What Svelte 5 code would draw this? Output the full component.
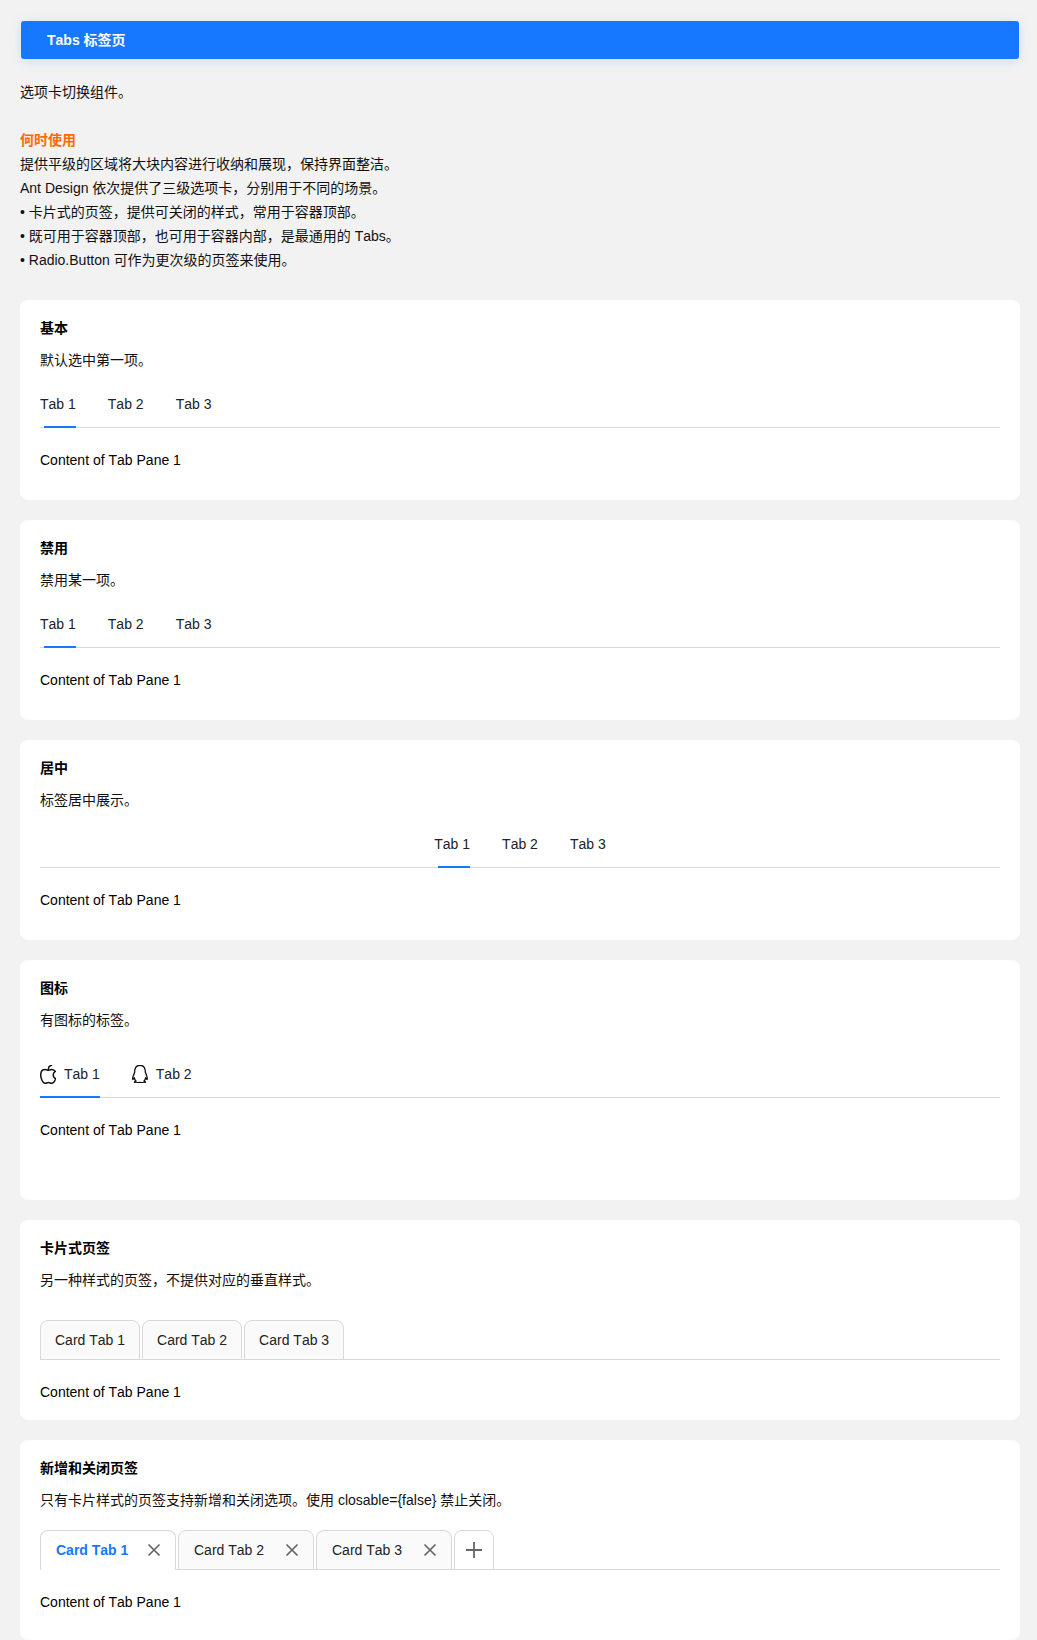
<script>
  const lines = [
    '提供平级的区域将大块内容进行收纳和展现，保持界面整洁。',
    'Ant Design 依次提供了三级选项卡，分别用于不同的场景。',
    '• 卡片式的页签，提供可关闭的样式，常用于容器顶部。',
    '• 既可用于容器顶部，也可用于容器内部，是最通用的 Tabs。',
    '• Radio.Button 可作为更次级的页签来使用。'
  ];
  const plainTabs = ['Tab 1', 'Tab 2', 'Tab 3'];
  const cardTabs = ['Card Tab 1', 'Card Tab 2', 'Card Tab 3'];
</script>

<div class="page">
  <header class="banner">Tabs 标签页</header>

  <section class="intro">
    <p class="lead">选项卡切换组件。</p>
    <h2>何时使用</h2>
    {#each lines as line}
      <p>{line}</p>
    {/each}
  </section>

  <section class="card">
    <h3>基本</h3>
    <p>默认选中第一项。</p>
    <div class="tabs">
      {#each plainTabs as tab}
        <span class="tab">{tab}</span>
      {/each}
      <i class="ink"></i>
    </div>
    <p class="pane">Content of Tab Pane 1</p>
  </section>

  <section class="card">
    <h3>禁用</h3>
    <p>禁用某一项。</p>
    <div class="tabs">
      {#each plainTabs as tab}
        <span class="tab">{tab}</span>
      {/each}
      <i class="ink"></i>
    </div>
    <p class="pane">Content of Tab Pane 1</p>
  </section>

  <section class="card">
    <h3>居中</h3>
    <p>标签居中展示。</p>
    <div class="tabs centered">
      <div class="group">
        {#each plainTabs as tab}
          <span class="tab">{tab}</span>
        {/each}
        <i class="ink"></i>
      </div>
    </div>
    <p class="pane">Content of Tab Pane 1</p>
  </section>

  <section class="card icons">
    <h3>图标</h3>
    <p>有图标的标签。</p>
    <div class="tabs">
      <span class="tab">
        <svg width="16" height="19" viewBox="150 90 720 860" fill="none" stroke="#111" stroke-width="68" stroke-linejoin="round">
          <path d="M747 536c0-68 31-120 93-158-35-50-88-77-157-83-66-5-138 38-164 38-28 0-92-36-142-36C273 298 180 380 180 547c0 49 9 100 27 152 24 69 101 222 184 219 47-1 81-33 142-33 60 0 90 33 143 33 84-1 156-141 178-207-107-50-107-170-107-175z"/>
          <path d="M525 300C520 210 575 125 665 105" stroke-linecap="round"/>
        </svg>
        Tab 1
      </span>
      <span class="tab">
        <svg width="16" height="18" viewBox="170 100 684 830" fill="none" stroke="#111" stroke-width="62" stroke-linejoin="round">
          <path d="M825 613c-16-51-34-95-63-165C767 262 689 112 512 112 332 112 256 265 261 448c-28 71-47 114-63 165-34 110-23 155-15 156 18 2 70-82 70-82 0 49 25 113 80 159-26 8-86 30-72 54 11 19 196 12 250 6 53 6 238 13 249-6 14-24-45-46-71-54 54-46 80-110 80-159 0 0 52 84 70 82 8-1 19-46-15-156z"/>
        </svg>
        Tab 2
      </span>
      <i class="ink wide"></i>
    </div>
    <p class="pane">Content of Tab Pane 1</p>
  </section>

  <section class="card cards">
    <h3>卡片式页签</h3>
    <p>另一种样式的页签，不提供对应的垂直样式。</p>
    <div class="card-tabs">
      {#each cardTabs as tab}
        <span class="card-tab">{tab}</span>
      {/each}
    </div>
    <p class="pane">Content of Tab Pane 1</p>
  </section>

  <section class="card editable">
    <h3>新增和关闭页签</h3>
    <p>只有卡片样式的页签支持新增和关闭选项。使用 closable={'{'}false{'}'} 禁止关闭。</p>
    <div class="card-tabs">
      {#each cardTabs as tab, i}
        <span class="card-tab closable" class:active={i === 0}>
          {tab}
          <svg width="14" height="14" viewBox="0 0 14 14" stroke="#666" stroke-width="1.7" fill="none">
            <path d="M1.5 1.5l11 11M12.5 1.5l-11 11"/>
          </svg>
        </span>
      {/each}
      <span class="card-tab add">
        <svg width="16" height="16" viewBox="0 0 16 16" stroke="#666" stroke-width="1.8" fill="none">
          <path d="M0 8h16M8 0v16"/>
        </svg>
      </span>
    </div>
    <p class="pane">Content of Tab Pane 1</p>
  </section>
</div>

<style>
  :global(body) {
    background: #f2f2f2;
  }

  .page {
    display: flex;
    flex-direction: column;
    padding: 21px 17px 0 20px;
    font-family: "Liberation Sans", "Noto Sans CJK SC", sans-serif;
    font-kerning: none;
    font-size: 14px;
    line-height: 24px;
    color: #111;
  }

  p, h2, h3 {
    margin: 0;
    font-size: 14px;
  }

  .banner {
    height: 38px;
    line-height: 38px;
    margin-left: 1px;
    margin-right: 1px;
    padding-left: 26px;
    background: #1677ff;
    color: #fff;
    font-weight: 700;
    border-radius: 3px;
    box-shadow: 0 2px 12px rgba(22, 119, 255, 0.15);
  }

  .intro {
    margin-top: 21px;
    margin-bottom: 28px;
  }

  .lead {
    margin-bottom: 24px;
  }

  .intro h2 {
    color: #ff6a00;
    font-weight: 700;
  }

  .card {
    background: #fff;
    border-radius: 8px;
    padding: 20px 20px 28px;
    margin-bottom: 20px;
  }

  .card:last-child {
    margin-bottom: 0;
    padding-bottom: 26px;
  }

  h3 {
    line-height: 16px;
    font-weight: 700;
    color: #000;
    margin-bottom: 12px;
  }

  .tabs {
    position: relative;
    display: flex;
    gap: 32px;
    margin-top: 10px;
    padding: 10px 0 11px;
    border-bottom: 1px solid #d9d9d9;
  }

  .tabs.centered {
    justify-content: center;
    padding: 0;
  }

  .group {
    position: relative;
    display: flex;
    gap: 32px;
    padding: 10px 0 11px;
  }

  .tab {
    display: flex;
    align-items: center;
    gap: 8px;
    color: #222;
  }

  .ink {
    position: absolute;
    left: 4px;
    bottom: -1px;
    width: 32px;
    height: 2px;
    background: #1677ff;
  }

  .ink.wide {
    left: 0;
    width: 60px;
  }

  .group .ink {
    left: 4px;
    bottom: -1px;
  }

  .pane {
    margin-top: 20px;
    color: #000;
  }

  .icons .tabs {
    padding: 20px 0 11px;
  }

  .icons .pane {
    margin-bottom: 30px;
  }

  .cards {
    padding-bottom: 16px;
  }

  .cards .card-tabs {
    margin-top: 28px;
  }

  .editable .card-tabs {
    margin-top: 18px;
  }

  .card-tabs {
    display: flex;
    gap: 2px;
    height: 40px;
    border-bottom: 1px solid #d9d9d9;
    box-sizing: border-box;
  }

  .card-tab {
    display: flex;
    align-items: center;
    justify-content: space-between;
    height: 40px;
    box-sizing: border-box;
    padding: 0 14px;
    background: #fafafa;
    border: 1px solid #d9d9d9;
    border-radius: 8px 8px 0 0;
    color: #222;
  }

  .closable {
    width: 136px;
    padding: 0 14px 0 15px;
  }

  .active {
    background: #fff;
    border-bottom-color: #fff;
    color: #1677ff;
    font-weight: 700;
  }

  .add {
    width: 40px;
    padding: 0;
    justify-content: center;
    background: #fff;
  }
</style>
